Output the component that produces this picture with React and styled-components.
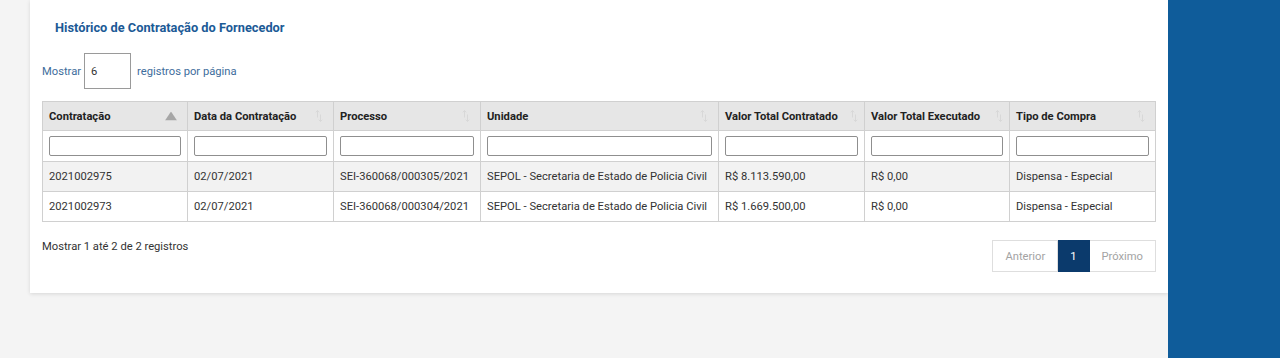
import React from 'react';
import styled, { createGlobalStyle } from 'styled-components';

const Global = createGlobalStyle`
  html, body {
    margin: 0;
    padding: 0;
    background: #f4f4f4;
    font-family: Roboto, 'Liberation Sans', sans-serif;
  }
`;

const Page = styled.div`
  display: flex;
  height: 358px;
  overflow: hidden;
`;

const Main = styled.main`
  flex: 1;
  padding-left: 30px;
`;

const Sidebar = styled.aside`
  width: 113px;
  background: #0f5c9a;
`;

const Card = styled.section`
  background: #fff;
  box-shadow: 0 1px 4px rgba(0, 0, 0, 0.12);
  padding: 19px 12px 21px 12px;
`;

const Title = styled.h2`
  margin: 0 0 0 13px;
  font-size: 12.8px;
  line-height: 17px;
  font-weight: 700;
  color: #1b5a96;
`;

const Length = styled.div`
  display: flex;
  align-items: center;
  gap: 3px;
  margin-top: 17px;
  font-size: 11.2px;
  color: #3e6d9c;
`;

const LengthInput = styled.div`
  width: 47px;
  height: 36px;
  box-sizing: border-box;
  border: 1px solid #9a9a9a;
  padding: 0 6px;
  display: flex;
  align-items: center;
  color: #333;
  margin-right: 3px;
`;

const Table = styled.table`
  margin-top: 12px;
  width: 1113px;
  border-collapse: collapse;
  table-layout: fixed;
  font-size: 11.2px;
  color: #333;
`;

const Th = styled.th`
  position: relative;
  height: 28px;
  padding: 0 22px 0 6px;
  text-align: left;
  font-weight: 700;
  background: #e6e6e6;
  border: 1px solid #d0d0d0;
  color: #222;
  white-space: nowrap;
`;

const SortIcon = styled.span`
  position: absolute;
  right: ${(p) => (p.$tight ? '6px' : '10px')};
  top: 50%;
  transform: translateY(-50%);
  display: flex;
`;

const FilterCell = styled.td`
  height: 30px;
  padding: 0 6px;
  border: 1px solid #d0d0d0;
  border-top: none;
`;

const FilterInput = styled.div`
  height: 20px;
  box-sizing: border-box;
  border: 1px solid #8f8f8f;
  border-radius: 2px;
`;

const Row = styled.tr`
  background: ${(p) => (p.$odd ? '#f2f2f2' : '#fff')};
`;

const Td = styled.td`
  height: 29px;
  padding: 0 6px;
  border: 1px solid #d0d0d0;
  white-space: nowrap;
  overflow: hidden;
`;

const Footer = styled.div`
  display: flex;
  justify-content: space-between;
  align-items: flex-start;
  margin-top: 18px;
  font-size: 11.2px;
  color: #333;
`;

const Pager = styled.div`
  display: flex;
`;

const PageBtn = styled.span`
  height: 32px;
  box-sizing: border-box;
  display: flex;
  align-items: center;
  padding: 0 12px;
  border: 1px solid ${(p) => (p.$active ? '#0b3a6c' : '#dedede')};
  color: ${(p) => (p.$active ? '#fff' : '#a3a3a3')};
  background: ${(p) => (p.$active ? '#0b3a6c' : '#fff')};
  & + & {
    border-left: none;
  }
`;

const columns = [
  { label: 'Contratação', sort: 'asc', w: 145 },
  { label: 'Data da Contratação', w: 146 },
  { label: 'Processo', w: 147 },
  { label: 'Unidade', w: 238 },
  { label: 'Valor Total Contratado', w: 146, tight: true },
  { label: 'Valor Total Executado', w: 145, tight: true },
  { label: 'Tipo de Compra', w: 146 },
];

const rows = [
  ['2021002975', '02/07/2021', 'SEI-360068/000305/2021', 'SEPOL - Secretaria de Estado de Policia Civil', 'R$ 8.113.590,00', 'R$ 0,00', 'Dispensa - Especial'],
  ['2021002973', '02/07/2021', 'SEI-360068/000304/2021', 'SEPOL - Secretaria de Estado de Policia Civil', 'R$ 1.669.500,00', 'R$ 0,00', 'Dispensa - Especial'],
];

const Triangle = () => (
  <svg width="12" height="9" viewBox="0 0 12 9">
    <path d="M6 0 L12 9 L0 9 Z" fill="#a6a6a6" />
  </svg>
);

const Arrows = () => (
  <svg width="8" height="13" viewBox="0 0 8 13" fill="none" stroke="#d8d8d8" strokeWidth="1">
    <path d="M2.5 8 V1 M0.8 2.8 L2.5 1 L4.2 2.8" />
    <path d="M5.5 5 V12 M3.8 10.2 L5.5 12 L7.2 10.2" />
  </svg>
);

export default function App() {
  return (
    <>
      <Global />
      <Page>
        <Main>
          <Card>
            <Title>Histórico de Contratação do Fornecedor</Title>
            <Length>
              Mostrar <LengthInput>6</LengthInput> registros por página
            </Length>
            <Table>
              <colgroup>
                {columns.map((c) => (
                  <col key={c.label} style={{ width: c.w }} />
                ))}
              </colgroup>
              <thead>
                <tr>
                  {columns.map((c) => (
                    <Th key={c.label}>
                      {c.label}
                      <SortIcon $tight={c.tight}>
                        {c.sort ? <Triangle /> : <Arrows />}
                      </SortIcon>
                    </Th>
                  ))}
                </tr>
                <tr>
                  {columns.map((c) => (
                    <FilterCell key={c.label}>
                      <FilterInput />
                    </FilterCell>
                  ))}
                </tr>
              </thead>
              <tbody>
                {rows.map((r, i) => (
                  <Row key={r[0]} $odd={i % 2 === 0}>
                    {r.map((v, j) => (
                      <Td key={j}>{v}</Td>
                    ))}
                  </Row>
                ))}
              </tbody>
            </Table>
            <Footer>
              <span>Mostrar 1 até 2 de 2 registros</span>
              <Pager>
                <PageBtn>Anterior</PageBtn>
                <PageBtn $active>1</PageBtn>
                <PageBtn>Próximo</PageBtn>
              </Pager>
            </Footer>
          </Card>
        </Main>
        <Sidebar />
      </Page>
    </>
  );
}
